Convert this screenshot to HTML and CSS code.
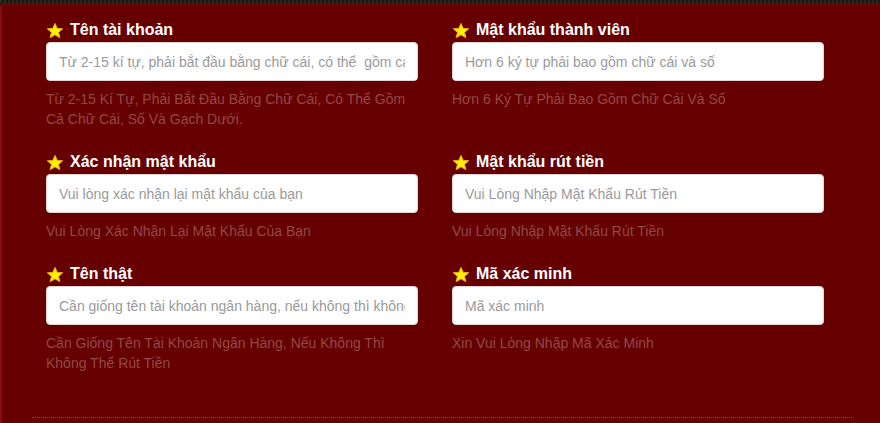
FILE: index.html
```html
<!DOCTYPE html>
<html lang="vi">
<head>
<meta charset="utf-8">
<title>Đăng ký</title>
<link rel="stylesheet" href="styles.css">
</head>
<body>
<div class="topstrip"></div>
<div class="panel">
  <form class="form">
    <div class="field">
      <label class="label"><svg class="star" viewBox="0 0 24 22"><polygon points="12,1.5 15,8.2 22.3,8.7 16.7,13.5 18.5,20.6 12,16.8 5.5,20.6 7.3,13.5 1.7,8.7 9,8.2"/></svg>Tên tài khoản</label>
      <input class="input" type="text" placeholder="Từ 2-15 kí tự, phải bắt đầu bằng chữ cái, có thể  gồm cả chữ cái, số và gạch dưới.">
      <div class="hint">Từ 2-15 Kí Tự, Phải Bắt Đầu Bằng Chữ Cái, Có Thể Gồm Cả Chữ Cái, Số Và Gạch Dưới.</div>
    </div>
    <div class="field">
      <label class="label"><svg class="star" viewBox="0 0 24 22"><polygon points="12,1.5 15,8.2 22.3,8.7 16.7,13.5 18.5,20.6 12,16.8 5.5,20.6 7.3,13.5 1.7,8.7 9,8.2"/></svg>Mật khẩu thành viên</label>
      <input class="input" type="password" placeholder="Hơn 6 ký tự phải bao gồm chữ cái và số">
      <div class="hint">Hơn 6 Ký Tự Phải Bao Gồm Chữ Cái Và Số</div>
    </div>
    <div class="field">
      <label class="label"><svg class="star" viewBox="0 0 24 22"><polygon points="12,1.5 15,8.2 22.3,8.7 16.7,13.5 18.5,20.6 12,16.8 5.5,20.6 7.3,13.5 1.7,8.7 9,8.2"/></svg>Xác nhận mật khẩu</label>
      <input class="input" type="password" placeholder="Vui lòng xác nhận lại mật khẩu của bạn">
      <div class="hint">Vui Lòng Xác Nhận Lại Mật Khẩu Của Bạn</div>
    </div>
    <div class="field">
      <label class="label"><svg class="star" viewBox="0 0 24 22"><polygon points="12,1.5 15,8.2 22.3,8.7 16.7,13.5 18.5,20.6 12,16.8 5.5,20.6 7.3,13.5 1.7,8.7 9,8.2"/></svg>Mật khẩu rút tiền</label>
      <input class="input" type="password" placeholder="Vui Lòng Nhập Mật Khẩu Rút Tiền">
      <div class="hint">Vui Lòng Nhập Mật Khẩu Rút Tiền</div>
    </div>
    <div class="field">
      <label class="label"><svg class="star" viewBox="0 0 24 22"><polygon points="12,1.5 15,8.2 22.3,8.7 16.7,13.5 18.5,20.6 12,16.8 5.5,20.6 7.3,13.5 1.7,8.7 9,8.2"/></svg>Tên thật</label>
      <input class="input" type="text" placeholder="Cần giống tên tài khoản ngân hàng, nếu không thì không thể rút tiền">
      <div class="hint">Cần Giống Tên Tài Khoản Ngân Hàng, Nếu Không Thì Không Thể Rút Tiền</div>
    </div>
    <div class="field">
      <label class="label"><svg class="star" viewBox="0 0 24 22"><polygon points="12,1.5 15,8.2 22.3,8.7 16.7,13.5 18.5,20.6 12,16.8 5.5,20.6 7.3,13.5 1.7,8.7 9,8.2"/></svg>Mã xác minh</label>
      <input class="input" type="text" placeholder="Mã xác minh">
      <div class="hint">Xin Vui Lòng Nhập Mã Xác Minh</div>
    </div>
  </form>
  <div class="divider"></div>
</div>
</body>
</html>
```

FILE: styles.css
```css
html, body {
  margin: 0;
  padding: 0;
  background: #1c1a12;
  height: 423px;
  overflow: hidden;
  font-family: "Liberation Sans", Arial, sans-serif;
}

.topstrip {
  height: 3px;
  background: repeating-linear-gradient(90deg, #2a2a1e 0 2px, #141410 2px 4px);
}

.panel {
  height: 420px;
  box-sizing: border-box;
  background: #660000;
  border-left: 2px solid #8c0a0a;
  border-top: 1px solid #7a0606;
  border-top-left-radius: 5px;
  padding-top: 16px;
}

.form {
  display: grid;
  grid-template-columns: 372px 372px;
  column-gap: 34px;
  row-gap: 23px;
  padding-left: 44px;
}

.field {
  display: flex;
  flex-direction: column;
}

.label {
  display: flex;
  align-items: center;
  height: 20px;
  line-height: 20px;
  font-size: 16px;
  font-weight: bold;
  color: #ffffff;
  margin-bottom: 2px;
}

.star {
  width: 18px;
  height: 17px;
  margin-right: 6px;
  fill: #fff200;
  stroke: #f0b000;
  stroke-width: 1.3;
  stroke-linejoin: round;
}

.input {
  box-sizing: border-box;
  width: 372px;
  height: 39px;
  border: 1px solid #e4d4d4;
  border-radius: 4px;
  background: #ffffff;
  padding: 0 12px;
  font-family: "Liberation Sans", Arial, sans-serif;
  font-size: 14px;
  color: #333;
  outline: none;
}

.input::placeholder {
  color: #9a9a9a;
}

.hint {
  margin-top: 8px;
  font-size: 14px;
  line-height: 20px;
  color: #934848;
}

.divider {
  margin: 44px 28px 0 30px;
  border-top: 1px dotted #8a4a4a;
}
```
